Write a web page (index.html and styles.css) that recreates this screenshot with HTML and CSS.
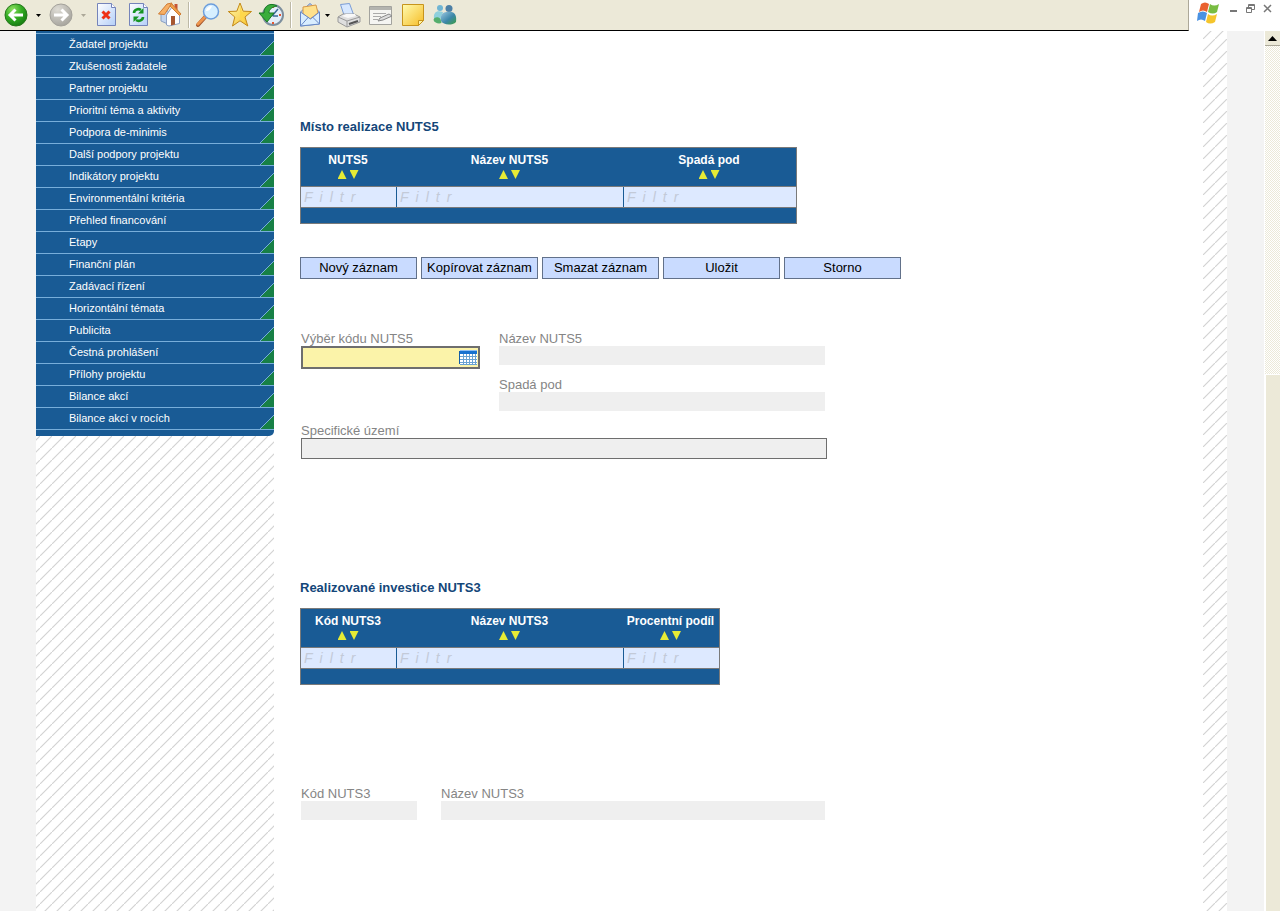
FILE: index.html
```html
<!DOCTYPE html>
<html lang="cs">
<head>
<meta charset="utf-8">
<title>Místo realizace</title>
<link rel="stylesheet" href="styles.css">
</head>
<body>
<svg class="defs" aria-hidden="true">
  <defs>
    <radialGradient id="green" cx=".35" cy=".25" r=".8"><stop offset="0" stop-color="#8fe060"/><stop offset=".5" stop-color="#34ad23"/><stop offset="1" stop-color="#147a10"/></radialGradient>
    <radialGradient id="grey" cx=".35" cy=".25" r=".8"><stop offset="0" stop-color="#dedcd5"/><stop offset="1" stop-color="#a5a39c"/></radialGradient>
    <linearGradient id="sheet" x2="1" y2="1"><stop offset="0" stop-color="#ffffff"/><stop offset="1" stop-color="#b4cff8"/></linearGradient>
    <linearGradient id="gold" x2="1" y2="1"><stop offset="0" stop-color="#fffbb0"/><stop offset="1" stop-color="#f6bc25"/></linearGradient>
    <linearGradient id="teal" x2="1" y2="1"><stop offset="0" stop-color="#9cc8e2"/><stop offset=".55" stop-color="#3c86a8"/><stop offset="1" stop-color="#3ca040"/></linearGradient>
  </defs>
</svg>
<header class="topbar">
  <div class="tools">
    <button class="tool" aria-label="Zpět"><svg width="32" height="30" viewBox="0 0 32 30"><circle cx="16" cy="15" r="11" fill="url(#green)" stroke="#27771b"/><path d="M23 15H10M15.500 9.500L10 15l5.500 5.500" fill="none" stroke="#fff" stroke-width="3"/></svg></button>
    <button class="drop" aria-label="Historie zpět"><svg width="5" height="3"><path d="M0 0h5L2.500 3z" fill="#000"/></svg></button>
    <button class="tool" aria-label="Vpřed"><svg width="32" height="30" viewBox="0 0 32 30"><circle cx="16" cy="15" r="11" fill="url(#grey)" stroke="#a4a29b"/><path d="M9 15h13M16.500 9.500L22 15l-5.500 5.500" fill="none" stroke="#fff" stroke-width="3"/></svg></button>
    <button class="drop" aria-label="Historie vpřed"><svg width="5" height="3"><path d="M0 0h5L2.500 3z" fill="#aca899"/></svg></button>
    <button class="tool" aria-label="Zastavit"><svg width="32" height="30" viewBox="0 0 32 30"><path d="M7.500 3.500h14l4 4v18h-18z" fill="url(#sheet)" stroke="#7584ba"/><path d="M21.500 3.500v4h4" fill="#fff" stroke="#7584ba"/><path d="M12.500 11.500l7 7M19.500 11.500l-7 7" stroke="#ee3015" stroke-width="3"/></svg></button>
    <button class="tool" aria-label="Obnovit"><svg width="32" height="30" viewBox="0 0 32 30"><path d="M7.500 3.500h14l4 4v18h-18z" fill="url(#sheet)" stroke="#7584ba"/><path d="M21.500 3.500v4h4" fill="#fff" stroke="#7584ba"/><path d="M12 13c0-3 4-5 7-3M21 17c0 3-4 5-7 3" fill="none" stroke="#159422" stroke-width="2.600"/><path d="M16 13.500h5.500V8zM17 16.500h-5.500V22z" fill="#159422"/></svg></button>
    <button class="tool" aria-label="Domů"><svg width="32" height="30" viewBox="0 0 32 30"><path d="M20.500 4h3v7h-3z" fill="#c55434"/><path d="M7 14l5-6 4 7v10l-9-4z" fill="#c3d5ef" stroke="#8a9fc2"/><path d="M12.500 15L18 7l7.500 8v8.500L15 26l-2.500-1z" fill="#fff" stroke="#8da1c5"/><path d="M4.500 14L13 4l5-1-7.500 11.500z" fill="#f7b065" stroke="#cf7c35"/><path d="M17.500 3.500L27 14l-1.500 1.500L16 6z" fill="#f0a04b" stroke="#cf7c35"/><path d="M17 16h4v8.500l-4 1z" fill="#a65731"/></svg></button>
    <span class="rule"></span>
    <button class="tool" aria-label="Hledat"><svg width="32" height="30" viewBox="0 0 32 30"><path d="M14 16L6 25" stroke="#a2552d" stroke-width="4" stroke-linecap="round"/><path d="M14 16L6 24" stroke="#ee954d" stroke-width="3" stroke-linecap="round"/><circle cx="19" cy="11.500" r="7.500" fill="#d6efff" stroke="#6d9edc" stroke-width="1.500"/><path d="M14 11c0-3 3-5 6-5-1 3-3 5-6 5z" fill="#fff"/></svg></button>
    <button class="tool" aria-label="Oblíbené"><svg width="32" height="30" viewBox="0 0 32 30"><path d="M16 3l3.200 8.200 8.300.3-6.500 5.500 2.800 9L16 20.800 8.500 26l2.300-9-6.500-5.500 8.500-.3z" fill="url(#gold)" stroke="#c48a17"/><path d="M16 6l2 6 6 1-5 4 2 6-5-5z" fill="#ffd84a"/></svg></button>
    <button class="tool" aria-label="Historie"><svg width="32" height="30" viewBox="0 0 32 30"><circle cx="17" cy="15" r="10" fill="#e3eefa" stroke="#7d8f9e" stroke-width="2"/><path d="M17 16h5M16 16l6-7" fill="none" stroke="#386a96" stroke-width="1.500"/><path d="M23 15h2M17 22v2M17 6v2" stroke="#e35630" stroke-width="2"/><path d="M21 6C14 2 8 6 8 13H3l8 9 7-9h-5c0-4 3-6 8-7z" fill="#3aad3c" stroke="#197a25"/></svg></button>
    <span class="rule"></span>
    <button class="tool mail" aria-label="Pošta"><svg width="27" height="30" viewBox="0 0 27 30"><path d="M6.500 12L16 3.500l9.500 8.500v12l-19 2z" fill="#bad3f8" stroke="#6888c6"/><path d="M9 7l13-2 2 8-8 6-7-5z" fill="#ffe18c" stroke="#d69848"/><path d="M6.500 12l10 7 9-7v12l-19 2z" fill="#d9edff" stroke="#6888c6"/><path d="M6.500 26l8-9M25.500 24l-7-7" stroke="#6888c6"/></svg></button>
    <button class="drop" aria-label="Možnosti pošty"><svg width="5" height="3"><path d="M0 0h5L2.500 3z" fill="#000"/></svg></button>
    <button class="tool" aria-label="Tisk"><svg width="32" height="30" viewBox="0 0 32 30"><path d="M7.500 4.500l9-1 4 11-9 2z" fill="#d7e8ff" stroke="#7b9dd6"/><path d="M5 17l5-3h11l6 3v5l-13 5-9-5z" fill="#dedede" stroke="#9a9a9a"/><path d="M5 17l9 4 13-4M14 21v6" fill="none" stroke="#999"/><path d="M9 16l4-2h9l1 2-8 2z" fill="#f8f8f8"/><path d="M16 24l9-3" stroke="#555" stroke-width="2"/></svg></button>
    <button class="tool" aria-label="Upravit"><svg width="32" height="30" viewBox="0 0 32 30"><path d="M4.500 6.500h22v18h-22z" fill="#f5f5f2" stroke="#a3a39e"/><path d="M5 7h21v3H5z" fill="#b4b4af"/><path d="M8 13.500h13M8 16.500h8M8 19.500h5" stroke="#aaa"/><path d="M13 21l2-3 9-4 3 2-9 4z" fill="#ddd" stroke="#888"/></svg></button>
    <button class="tool" aria-label="Poznámka"><svg width="32" height="30" viewBox="0 0 32 30"><path d="M5.500 4.500h21v16l-5 5h-16z" fill="url(#gold)" stroke="#c7941c"/><path d="M21.500 25.500v-5h5z" fill="#fff3a0" stroke="#c7941c"/></svg></button>
    <button class="tool" aria-label="Messenger"><svg width="32" height="30" viewBox="0 0 32 30"><circle cx="11" cy="8" r="3" fill="#70b5d3"/><path d="M5 19c-1-7 3-9 9-7l-3 8z" fill="#8fd0dc"/><circle cx="20" cy="8.500" r="3.500" fill="#4c7fa5"/><path d="M12 21c-1-8 3-9 7-9 7-1 9 4 8 10-4 4-13 3-15-1z" fill="url(#teal)"/><path d="M4.500 20c0-3 5-4 7-1l1 4c-3 1-7 0-8-3z" fill="#55ae6d"/></svg></button>
  </div>
  <div class="window-controls">
    <svg class="flag" width="24" height="24" viewBox="0 0 24 24" role="img" aria-label="Windows"><path d="M5 3q4-3 8 0l-2 8q-4-3-8 0z" fill="#e9612f"/><path d="M14 3q4 3 9 0l-2 8q-4 3-9 0z" fill="#79bd42"/><path d="M2 12q5-3 9 0l-2 8q-4-3-8 0z" fill="#4a92e2"/><path d="M12 13q4 3 9 0l-2 8q-5 3-9 0z" fill="#f5c52c"/></svg>
    <button class="control" aria-label="Minimalizovat"><svg width="9" height="9"><path d="M1 7h7" stroke="#777" stroke-width="2"/></svg></button>
    <button class="control" aria-label="Obnovit okno"><svg width="9" height="9"><path d="M2.500 3V.500h6v5H6M.500 3.500h5v5h-5zM2 1.500h6M0 4.500h6" fill="none" stroke="#777"/></svg></button>
    <button class="control" aria-label="Zavřít"><svg width="9" height="9"><path d="M1 1l7 7M8 1L1 8" stroke="#777" stroke-width="1.500"/></svg></button>
  </div>
</header>
<div class="page">
  <aside class="sidebar">
    <nav class="menu">
      <a href="#">Žadatel projektu</a>
      <a href="#">Zkušenosti žadatele</a>
      <a href="#">Partner projektu</a>
      <a href="#">Prioritní téma a aktivity</a>
      <a href="#">Podpora de-minimis</a>
      <a href="#">Další podpory projektu</a>
      <a href="#">Indikátory projektu</a>
      <a href="#">Environmentální kritéria</a>
      <a href="#">Přehled financování</a>
      <a href="#">Etapy</a>
      <a href="#">Finanční plán</a>
      <a href="#">Zadávací řízení</a>
      <a href="#">Horizontální témata</a>
      <a href="#">Publicita</a>
      <a href="#">Čestná prohlášení</a>
      <a href="#">Přílohy projektu</a>
      <a href="#">Bilance akcí</a>
      <a href="#">Bilance akcí v rocích</a>
    </nav>
  </aside>
  <main class="content">
    <section class="place">
      <h2>Místo realizace NUTS5</h2>
      <table class="grid">
        <colgroup><col class="code"><col class="name"><col class="parent"></colgroup>
        <thead>
          <tr>
            <th>NUTS5<span class="sort"><button class="up" aria-label="Vzestupně"></button><button class="down" aria-label="Sestupně"></button></span></th>
            <th>Název NUTS5<span class="sort"><button class="up" aria-label="Vzestupně"></button><button class="down" aria-label="Sestupně"></button></span></th>
            <th>Spadá pod<span class="sort"><button class="up" aria-label="Vzestupně"></button><button class="down" aria-label="Sestupně"></button></span></th>
          </tr>
        </thead>
        <tbody>
          <tr>
            <td><input type="text" placeholder="Filtr" aria-label="Filtr NUTS5"></td>
            <td><input type="text" placeholder="Filtr" aria-label="Filtr Název NUTS5"></td>
            <td><input type="text" placeholder="Filtr" aria-label="Filtr Spadá pod"></td>
          </tr>
        </tbody>
        <tfoot><tr><td colspan="3"></td></tr></tfoot>
      </table>
      <div class="actions">
        <button>Nový záznam</button>
        <button>Kopírovat záznam</button>
        <button>Smazat záznam</button>
        <button>Uložit</button>
        <button>Storno</button>
      </div>
      <form class="form">
        <div class="field picker">
          <label for="kod5">Výběr kódu NUTS5</label>
          <div class="pick">
            <input id="kod5" type="text">
            <button type="button" aria-label="Vybrat ze seznamu"><svg width="18" height="15" viewBox="0 0 18 15"><path d="M1 1h17v14H1z" fill="#fff"/><path d="M1 0h17v1H1z" fill="#8dbdf0"/><path d="M1 1h17v3H1z" fill="#1671d0"/><path d="M.5 1v13" stroke="#145ea8"/><path d="M1 6.500h17M1 9.500h17M1 12.500h17M4.500 4v11M7.500 4v11M10.500 4v11M13.500 4v11M16.500 4v11M1 14.500h17" stroke="#69a2d2"/></svg></button>
          </div>
        </div>
        <div class="field"><label for="nazev5">Název NUTS5</label><input id="nazev5" type="text" readonly></div>
        <div class="field second"><label for="spada">Spadá pod</label><input id="spada" type="text" readonly></div>
        <div class="field wide"><label for="uzemi">Specifické území</label><input id="uzemi" type="text"></div>
      </form>
    </section>
    <section class="investments">
      <h2>Realizované investice NUTS3</h2>
      <table class="grid">
        <colgroup><col class="code"><col class="name"><col class="share"></colgroup>
        <thead>
          <tr>
            <th>Kód NUTS3<span class="sort"><button class="up" aria-label="Vzestupně"></button><button class="down" aria-label="Sestupně"></button></span></th>
            <th>Název NUTS3<span class="sort"><button class="up" aria-label="Vzestupně"></button><button class="down" aria-label="Sestupně"></button></span></th>
            <th>Procentní podíl<span class="sort"><button class="up" aria-label="Vzestupně"></button><button class="down" aria-label="Sestupně"></button></span></th>
          </tr>
        </thead>
        <tbody>
          <tr>
            <td><input type="text" placeholder="Filtr" aria-label="Filtr Kód NUTS3"></td>
            <td><input type="text" placeholder="Filtr" aria-label="Filtr Název NUTS3"></td>
            <td><input type="text" placeholder="Filtr" aria-label="Filtr Procentní podíl"></td>
          </tr>
        </tbody>
        <tfoot><tr><td colspan="3"></td></tr></tfoot>
      </table>
      <form class="form detail">
        <div class="field"><label for="kod3">Kód NUTS3</label><input id="kod3" type="text" readonly></div>
        <div class="field"><label for="nazev3">Název NUTS3</label><input id="nazev3" type="text" readonly></div>
      </form>
    </section>
  </main>
  <div class="hatch"></div>
  <div class="gutter"></div>
  <div class="scrollbar">
    <button aria-label="Posunout nahoru"><svg width="9" height="5"><path d="M0 5h9L4.500 0z" fill="#000"/></svg></button>
    <div class="track"></div>
    <div class="thumb"></div>
  </div>
</div>
</body>
</html>
```
FILE: styles.css
```css
* { box-sizing: border-box; }

body {
  margin: 0;
  height: 100vh;
  display: flex;
  flex-direction: column;
  overflow: hidden;
  background: #fff;
  font: 13px/16px "Liberation Sans", Arial, sans-serif;
}

button, input { font: inherit; margin: 0; padding: 0; border: 0; }
svg { display: block; }
.defs { width: 0; height: 0; position: absolute; }

/* Browser toolbar */
.topbar { display: flex; flex: none; }
.tools {
  flex: 1;
  display: flex;
  align-items: center;
  height: 31px;
  background: #ece9d8;
  border-right: 1px solid #aca899;
  border-bottom: 1px solid #000;
}
.tool { flex: none; width: 32px; background: none; }
.mail { width: 27px; }
.drop {
  flex: none;
  width: 13px;
  height: 30px;
  background: none;
  display: flex;
  align-items: center;
  justify-content: center;
}
.mail + .drop { width: 12px; }
.rule {
  flex: none;
  width: 2px;
  height: 26px;
  margin: 0 2px;
  background: #bdb9a6;
  border-right: 1px solid #fff;
}
.window-controls {
  width: 91px;
  height: 31px;
  display: flex;
  align-items: flex-start;
  gap: 8px;
  padding: 4px 7px 0;
}
.flag { margin: -3px 1px 0 0; }
.control { background: none; flex: none; width: 9px; }

/* Page frame */
.page {
  flex: 1;
  min-height: 0;
  display: flex;
  border-left: 36px solid #f3f3f3;
}
.sidebar, .hatch {
  background-image: linear-gradient(135deg, transparent 44%, #d4d4d4 50%, transparent 56%);
  background-size: 12px 12px;
}
.sidebar { flex: none; width: 238px; background-position: 4px 9px; }
.hatch { flex: none; width: 24px; background-position: 0 8px; }
.gutter { flex: none; width: 37px; background: #f3f3f3; }

.menu {
  padding: 2px 0 6px;
  background: #195b95;
  border-bottom-right-radius: 5px;
}
.menu a {
  display: block;
  height: 22px;
  padding-left: 33px;
  border-top: 1px solid #78aeda;
  font-size: 11px;
  line-height: 21px;
  color: #fff;
  text-decoration: none;
  background: linear-gradient(135deg, transparent 47%, #78aeda 47% 52%, #178046 53%) right bottom / 14px 14px no-repeat;
}
.menu a:last-child { height: 23px; border-bottom: 1px solid #78aeda; }

/* Scroll bar */
.scrollbar {
  flex: none;
  width: 16px;
  display: flex;
  flex-direction: column;
  border-left: 1px solid #fff;
}
.scrollbar button {
  flex: none;
  height: 15px;
  display: flex;
  align-items: center;
  justify-content: center;
  background: #ece9d8;
  border-bottom: 1px solid #aca899;
}
.track {
  flex: 328;
  background: repeating-conic-gradient(#ece9d8 0 25%, #fff 0 50%) 0 0 / 2px 2px;
}
.thumb {
  flex: 536;
  background: #ece9d8;
  border: solid #fff;
  border-width: 1px 0 0 1px;
}

/* Content */
.content { flex: 1; min-width: 0; padding: 89px 26px 0; }
h2 {
  margin: 0 0 13px;
  font-size: 13px;
  line-height: 14px;
  color: #134679;
}
.grid {
  table-layout: fixed;
  width: min-content;
  border-collapse: separate;
  border-spacing: 0;
  border: 1px solid #7a7a7a;
  background: #195b95;
}
.code { width: 96px; }
.name { width: 227px; }
.parent { width: 172px; }
.share { width: 95px; }
.grid th {
  height: 38px;
  padding: 4px 2px 0 0;
  vertical-align: top;
  font-size: 12px;
  line-height: 16px;
  color: #fff;
  white-space: nowrap;
}
.sort { display: flex; justify-content: center; gap: 3px; padding-top: 2px; }
.sort button { width: 9px; height: 9px; background: #e6ea35; }
.up { clip-path: polygon(50% 0, 100% 100%, 0 100%); }
.down { clip-path: polygon(0 0, 100% 0, 50% 100%); }
.grid tbody td {
  padding: 0;
  border: solid #7a7a7a;
  border-width: 1px 0;
}
.grid input {
  display: block;
  width: 100%;
  height: 20px;
  padding-left: 3px;
  border-right: 1px solid #195b95;
  background: #dde9ff;
  font-size: 14px;
}
.grid td:last-child input { border-right: 0; }
.grid input::placeholder {
  color: #c3cad8;
  font-style: italic;
  letter-spacing: 7px;
  opacity: 1;
}
.grid tfoot td { height: 15px; padding: 0; }

.actions { display: flex; gap: 4px; margin-top: 33px; }
.actions button {
  width: 117px;
  height: 22px;
  border: 1px solid #62718a;
  background: #c9dbff;
  color: #000;
  white-space: nowrap;
}

.form {
  display: grid;
  grid-template-columns: 179px 326px;
  gap: 13px 19px;
  margin: 53px 0 0 1px;
}
.field { display: flex; flex-direction: column; }
.field label { color: #858585; line-height: 14px; }
.field input { height: 19px; width: 100%; background: #efefef; }
.second { grid-column: 2; margin-top: -4px; }
.wide { grid-column: 1 / -1; width: 526px; }
.field.wide input { height: 21px; border: 1px solid #6e6e6e; }
.pick {
  display: flex;
  align-items: center;
  height: 23px;
  padding-right: 1px;
  border: 2px solid #6e6e6e;
  background: #fbf3a9;
}
.field .pick input { flex: 1; min-width: 0; background: none; }
.pick button { background: none; }

.investments { margin-top: 122px; }
.detail {
  grid-template-columns: 116px 384px;
  column-gap: 24px;
  margin-top: 102px;
}
```
